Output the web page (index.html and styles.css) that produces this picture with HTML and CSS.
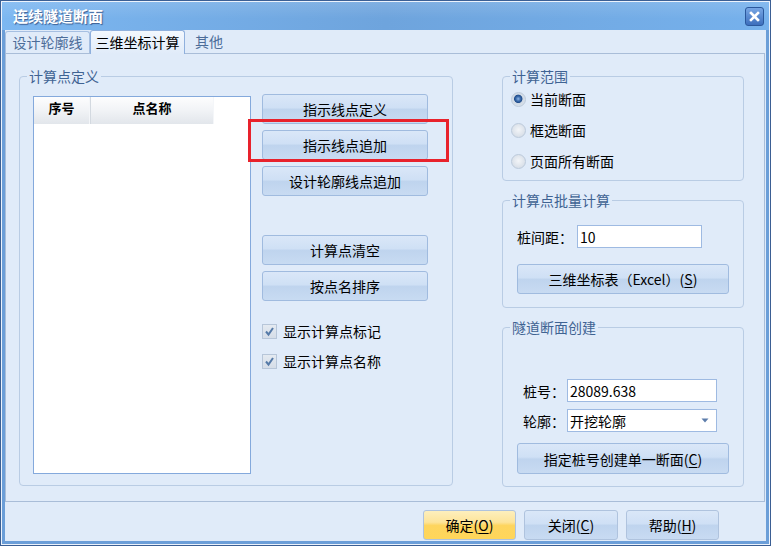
FILE: index.html
```html
<!DOCTYPE html>
<html lang="zh-CN">
<head>
    <meta charset="UTF-8">
    <title>连续隧道断面</title>
    <link rel="stylesheet" href="styles.css">
</head>
<body>

<div class="window">
    <div class="titlebar">
        <span class="title">连续隧道断面</span>
        <span class="close-btn">
            <svg width="11" height="11" viewBox="0 0 11 11"><path d="M2 2 L9 9 M9 2 L2 9" stroke="#fff" stroke-width="2.6" stroke-linecap="square"/></svg>
        </span>
    </div>

    <div class="client">
        <div class="tabs">
            <div class="tab tab-outline">设计轮廓线</div>
            <div class="tab active">三维坐标计算</div>
            <div class="tab plain">其他</div>
        </div>

        <div class="tab-page">
            <!-- 计算点定义 -->
            <div class="group calc-def">
                <span class="group-title">计算点定义</span>
                <div class="list">
                    <div class="list-head">
                        <div class="col-no">序号</div>
                        <div class="col-name">点名称</div>
                    </div>
                </div>
                <div class="btn-col">
                    <div class="btn">指示线点定义</div>
                    <div class="btn">指示线点追加</div>
                    <div class="btn">设计轮廓线点追加</div>
                    <div class="btn gap-top">计算点清空</div>
                    <div class="btn">按点名排序</div>
                    <div class="checks">
                        <div class="check">
                            <span class="check-box"><svg width="13" height="13" viewBox="0 0 13 13"><path d="M3 6.5 L5.5 9.5 L10 3" fill="none" stroke="#557aa8" stroke-width="2"/></svg></span>
                            显示计算点标记
                        </div>
                        <div class="check">
                            <span class="check-box"><svg width="13" height="13" viewBox="0 0 13 13"><path d="M3 6.5 L5.5 9.5 L10 3" fill="none" stroke="#557aa8" stroke-width="2"/></svg></span>
                            显示计算点名称
                        </div>
                    </div>
                    <div class="highlight"></div>
                </div>
            </div>

            <div class="right-col">
                <!-- 计算范围 -->
                <div class="group range">
                    <span class="group-title">计算范围</span>
                    <div class="radio-row"><span class="radio on"></span>当前断面</div>
                    <div class="radio-row"><span class="radio"></span>框选断面</div>
                    <div class="radio-row"><span class="radio"></span>页面所有断面</div>
                </div>

                <!-- 计算点批量计算 -->
                <div class="group batch">
                    <span class="group-title">计算点批量计算</span>
                    <div class="field-row">
                        <span class="field-label">桩间距：</span>
                        <span class="input">10</span>
                    </div>
                    <div class="btn">三维坐标表（Excel）(<u>S</u>)</div>
                </div>

                <!-- 隧道断面创建 -->
                <div class="group create">
                    <span class="group-title">隧道断面创建</span>
                    <div class="field-row">
                        <span class="field-label">桩号：</span>
                        <span class="input">28089.638</span>
                    </div>
                    <div class="field-row">
                        <span class="field-label">轮廓：</span>
                        <span class="input combo">开挖轮廓
                            <svg width="8" height="5" viewBox="0 0 8 5"><path d="M0.5 0.5 L7.5 0.5 L4 4.5 Z" fill="#5d7dab"/></svg>
                        </span>
                    </div>
                    <div class="btn">指定桩号创建单一断面(<u>C</u>)</div>
                </div>
            </div>
        </div>

        <div class="footer">
            <div class="btn btn-ok">确定(<u>O</u>)</div>
            <div class="btn btn-close">关闭(<u>C</u>)</div>
            <div class="btn">帮助(<u>H</u>)</div>
        </div>
    </div>
</div>

</body>
</html>
```

FILE: styles.css
```css
body {
    margin: 0;
    font-family: "Noto Sans CJK SC", "Liberation Sans", sans-serif;
    font-size: 14px;
    color: #000;
}

.window {
    width: 771px;
    height: 546px;
    box-sizing: border-box;
    border: 1px solid #3b5f94;
    padding: 1px;
    background-color: #edf3fc;
    display: flex;
    flex-direction: column;
}

.titlebar {
    height: 28px;
    flex: none;
    display: flex;
    align-items: center;
    justify-content: space-between;
    padding: 0 5px 0 11px;
    background: linear-gradient(180deg, rgba(255, 255, 255, 0.12), rgba(255, 255, 255, 0) 60%),
                linear-gradient(90deg, #7cb7f1 0%, #6ea4dd 50%, #76b1ec 100%);
}

.title {
    color: #fff;
    font-weight: bold;
    font-size: 15px;
    line-height: 18px;
    text-shadow: 1px 1px 1px #3b5f94;
}

.close-btn {
    width: 19px;
    height: 19px;
    box-sizing: border-box;
    border: 1px solid #2b589c;
    border-radius: 3px;
    background: linear-gradient(#77a6e4, #3d6fbd);
    display: flex;
    align-items: center;
    justify-content: center;
}

.client {
    flex: 1;
    border: 3px solid #6b9ed8;
    border-top: none;
    background-color: #e0ebf9;
    display: flex;
    flex-direction: column;
}

/* вкладки */
.tabs {
    height: 23px;
    flex: none;
    display: flex;
    align-items: flex-end;
}

.tab {
    box-sizing: border-box;
    height: 22px;
    line-height: 20px;
    border: 1px solid #a6bfe1;
    border-bottom: none;
    border-radius: 3px 3px 0 0;
    color: #4d6d99;
    text-align: center;
}

.tab-outline {
    width: 85px;
}

.tab.active {
    width: 95px;
    height: 24px;
    line-height: 23px;
    margin-bottom: -1px;
    position: relative;
    z-index: 1;
    border-color: #8fb0dd;
    background: linear-gradient(#f3f8fe, #e0ebf9);
    color: #000;
}

.tab.plain {
    border: none;
    padding-left: 10px;
}

.tab-page {
    height: 449px;
    flex: none;
    box-sizing: border-box;
    margin-right: 1px;
    border: 1px solid #a9bdd8;
    display: flex;
    align-items: flex-start;
    padding: 22px 20px 0 13px;
}

/* группы */
.group {
    position: relative;
    box-sizing: border-box;
    border: 1px solid #b9cce4;
    border-radius: 4px;
}

.group-title {
    position: absolute;
    top: -9px;
    left: 7px;
    padding: 0 2px;
    line-height: 16px;
    background-color: #e0ebf9;
    color: #3f6393;
}

.calc-def {
    width: 434px;
    height: 410px;
    display: flex;
    align-items: flex-start;
    padding: 17px 0 0 13px;
}

.list {
    width: 218px;
    height: 378px;
    margin-top: 2px;
    box-sizing: border-box;
    border: 1px solid #84a9dc;
    background-color: #fff;
}

.list-head {
    display: flex;
    height: 27px;
}

.list-head div {
    box-sizing: border-box;
    font-weight: bold;
    font-size: 13px;
    line-height: 16px;
    padding-top: 3px;
    text-align: center;
    background: linear-gradient(#fdfdfe, #f1f3f6 50%, #e2e6eb);
    border-right: 1px solid #f4f6f9;
}

.list-head .col-no {
    width: 56px;
}

.list-head .col-name {
    width: 124px;
    border-left: 1px solid #d3d9e0;
}

.btn {
    box-sizing: border-box;
    height: 30px;
    border: 1px solid #a0bbdf;
    border-radius: 3px;
    background: linear-gradient(#dae7f8 0%, #cfe0f5 45%, #bfd4ee 52%, #c8dbf2 100%);
    display: flex;
    align-items: center;
    justify-content: center;
    white-space: nowrap;
}

.btn u {
    text-underline-offset: 2px;
}

.btn-col {
    position: relative;
    width: 166px;
    margin-left: 11px;
    display: flex;
    flex-direction: column;
    gap: 6px;
}

.btn-col .gap-top {
    margin-top: 33px;
}

.checks {
    margin-top: 14px;
    display: flex;
    flex-direction: column;
    gap: 10px;
}

.check {
    display: flex;
    align-items: center;
    height: 20px;
    gap: 6px;
}

.check-box {
    width: 15px;
    height: 15px;
    box-sizing: border-box;
    border: 1px solid #b7c6d9;
    background: linear-gradient(#e4eaf1, #d5dde8);
    display: flex;
    align-items: center;
    justify-content: center;
}

.highlight {
    position: absolute;
    left: -14px;
    top: 25px;
    width: 201px;
    height: 43px;
    box-sizing: border-box;
    border: 3px solid #e8222c;
}

.right-col {
    width: 242px;
    margin-left: 49px;
    display: flex;
    flex-direction: column;
}

.range {
    height: 105px;
    padding: 12px 0 0 8px;
    display: flex;
    flex-direction: column;
    gap: 11px;
}

.radio-row {
    display: flex;
    align-items: center;
    height: 20px;
    gap: 4px;
}

.radio {
    width: 15px;
    height: 15px;
    box-sizing: border-box;
    border-radius: 50%;
    border: 1px solid #bccadb;
    background: radial-gradient(circle at 50% 45%, #f3f5f8 0, #dde3eb 60%, #cdd6e1 100%);
}

.radio.on {
    background: radial-gradient(circle at 48% 45%, #8fb6e6 0, #3566a8 2.5px, #244f8c 3.8px, #cfd9e5 4.6px, #e4e9ef 100%);
}

.batch {
    margin-top: 19px;
    height: 108px;
    padding: 24px 0 0 14px;
}

.field-row {
    display: flex;
    align-items: center;
    height: 23px;
}

.field-label {
    width: 60px;
    flex: none;
}

.input {
    box-sizing: border-box;
    width: 125px;
    height: 23px;
    border: 1px solid #9ebae2;
    background-color: #fff;
    padding-left: 2px;
    display: flex;
    align-items: center;
}

.batch .btn {
    width: 212px;
    margin-top: 16px;
}

.create {
    margin-top: 19px;
    height: 160px;
    padding: 51px 0 0 14px;
}

.create .field-label {
    width: 50px;
    box-sizing: border-box;
    text-align: right;
    padding-right: 2px;
}

.create .input {
    width: 150px;
}

.create .field-row + .field-row {
    margin-top: 7px;
}

.combo {
    justify-content: space-between;
    padding-right: 7px;
}

.create .btn {
    width: 212px;
    height: 31px;
    margin-top: 11px;
}

/* нижние кнопки */
.footer {
    flex: 1;
    display: flex;
    justify-content: flex-end;
    align-items: flex-start;
    gap: 8px;
    padding: 8px 47px 0 0;
}

.footer .btn {
    width: 93px;
    border-color: #afc3de;
}

.footer .btn-close {
    width: 94px;
}

.footer .btn-ok {
    background: linear-gradient(#fdefbd 0%, #fde49a 40%, #fed55e 52%, #ffd65a 100%);
}
```
